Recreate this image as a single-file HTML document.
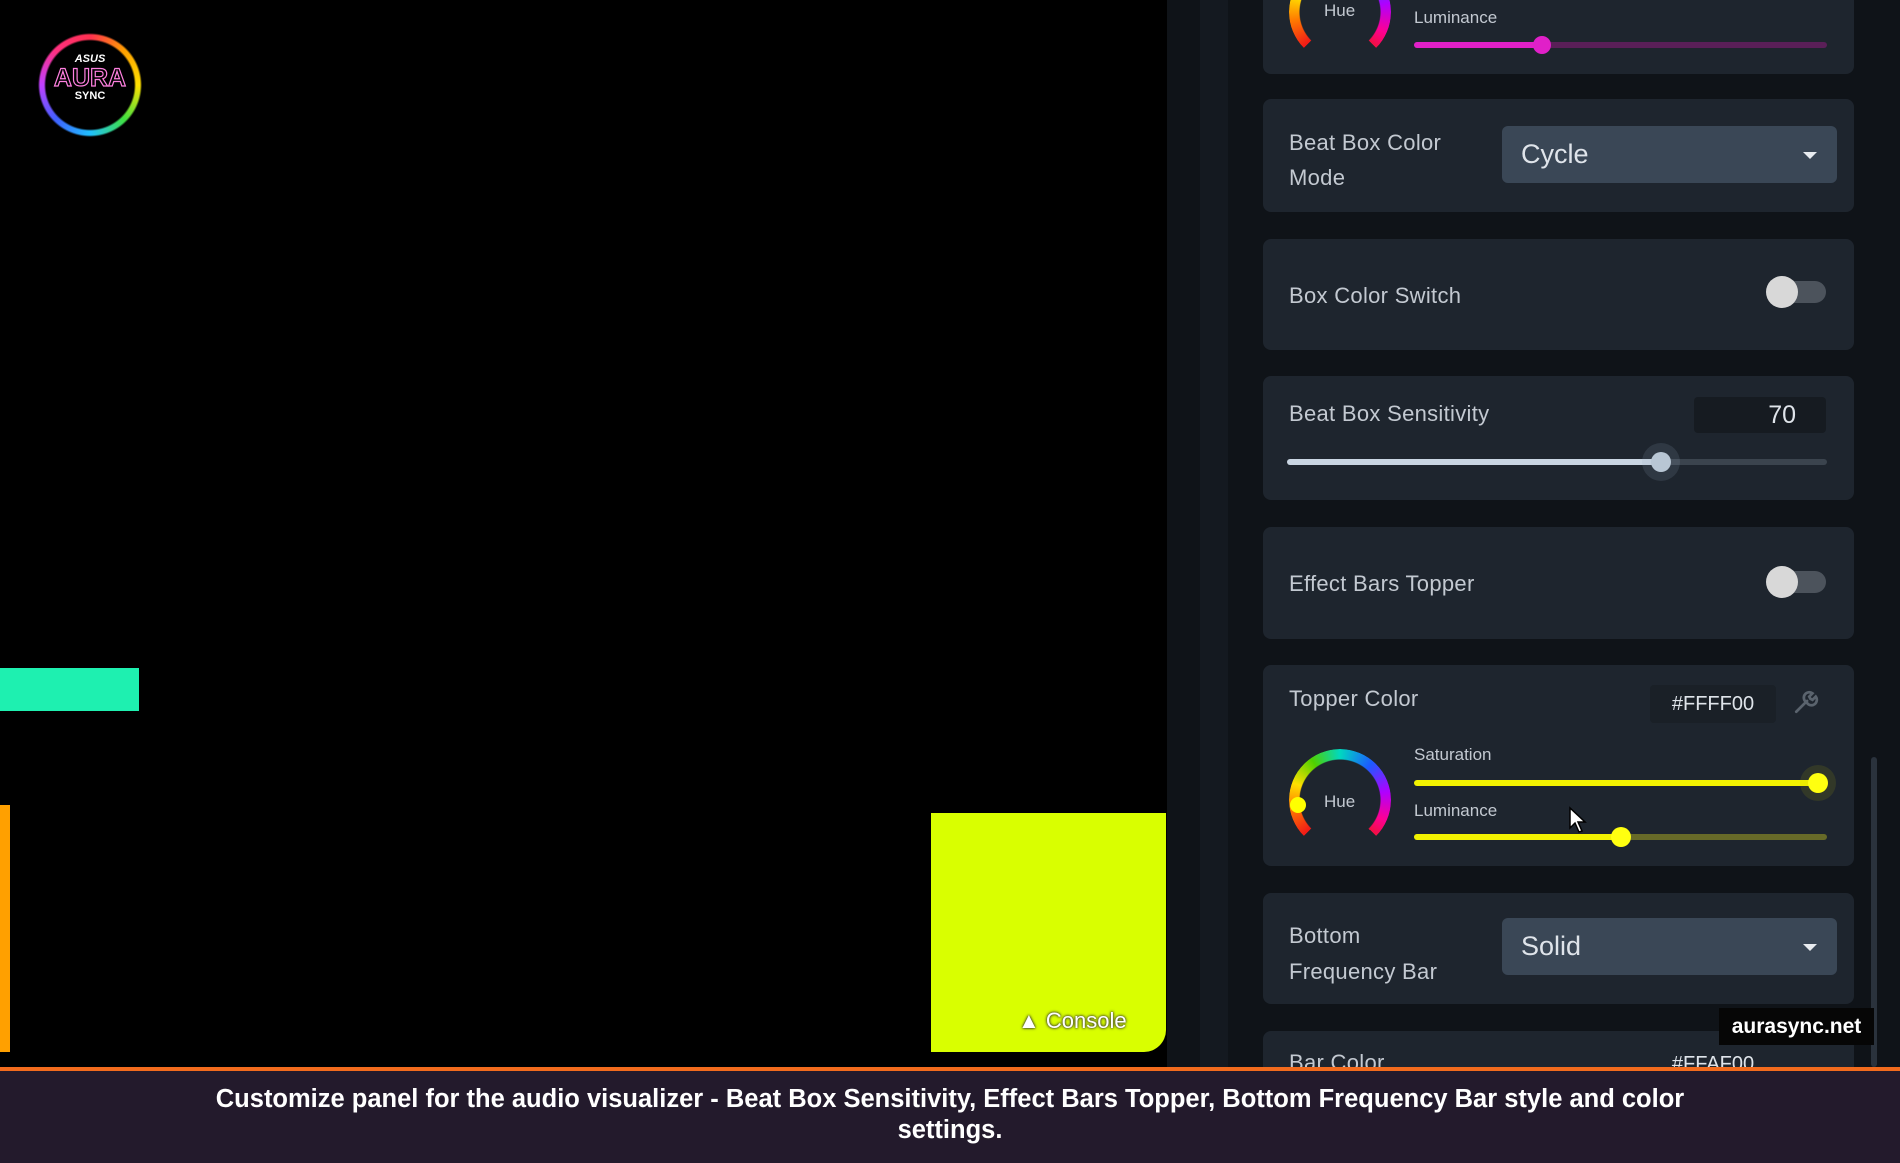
<!DOCTYPE html>
<html><head><meta charset="utf-8"><style>
*{margin:0;padding:0;box-sizing:border-box}
body{width:1900px;height:1163px;background:#000;position:relative;overflow:hidden;font-family:"Liberation Sans",sans-serif}
.a{position:absolute}
.card{position:absolute;left:1263px;width:591px;background:#1e252e;border-radius:8px}
.lbl{position:absolute;color:#c3c9d1;font-size:22px;letter-spacing:0.3px}
.dd{position:absolute;left:1502px;width:335px;background:#3a4756;border-radius:6px;color:#dfe4ea;font-size:27px}
.caret{position:absolute;right:20px;top:50%;margin-top:-3px;width:0;height:0;border-left:7px solid transparent;border-right:7px solid transparent;border-top:7px solid #e8ecf0}
.tog{position:absolute;width:60px;height:22px}
.tog .tr{position:absolute;left:10px;top:0;width:50px;height:22px;border-radius:11px;background:#4c535c}
.tog .th{position:absolute;left:0;top:-5px;width:32px;height:32px;border-radius:50%;background:#d8d8d8}
.hue{position:absolute;width:102px;height:102px;border-radius:50%;background:conic-gradient(from 225deg,#f01818 0deg,#ff7a00 35deg,#ffe000 65deg,#4fd000 100deg,#00d8c0 135deg,#1b5cff 175deg,#b000ff 215deg,#ff0090 250deg,#f01040 270deg,transparent 270deg);-webkit-mask:radial-gradient(circle,transparent 40px,#000 41px);mask:radial-gradient(circle,transparent 40px,#000 41px)}
.sl{position:absolute;height:6px;border-radius:3px}
.dot{position:absolute;border-radius:50%}
</style></head><body>
<!-- left -->
<div class="a" style="left:30px;top:25px;width:120px;height:120px;border-radius:50%;background:conic-gradient(#ff3050,#ffa000,#ffe000,#40e040,#20c0ff,#4060ff,#c040ff,#ff3080,#ff3050);-webkit-mask:radial-gradient(circle,transparent 44px,#000 46px,#000 50px,transparent 52px);mask:radial-gradient(circle,transparent 44px,#000 46px,#000 50px,transparent 52px);filter:drop-shadow(0 0 6px #ff6090)"></div>
<div class="a" style="left:40px;top:53px;width:100px;text-align:center;color:#fff;font-size:11px;font-weight:bold;font-style:italic">ASUS</div>
<div class="a" style="left:40px;top:64px;width:100px;text-align:center;color:transparent;-webkit-text-stroke:1.2px #ff80e0;font-size:25px;font-weight:bold">AURA</div>
<div class="a" style="left:40px;top:90px;width:100px;text-align:center;color:#fff;font-size:11px;font-weight:bold">SYNC</div>
<div class="a" style="left:0;top:668px;width:139px;height:43px;background:#1ef0b0"></div>
<div class="a" style="left:0;top:805px;width:10px;height:247px;background:#ffa000"></div>
<div class="a" style="left:931px;top:813px;width:235px;height:239px;background:#d9ff00;border-bottom-right-radius:22px"></div>
<div class="a" style="left:1018px;top:1008px;color:#fff;font-size:22px;text-shadow:0 0 3px #333,0 0 2px #333">▲ Console</div>
<!-- panel -->
<div class="a" style="left:1167px;top:0;width:733px;height:1070px;background:#0f1318"></div>
<div class="a" style="left:1200px;top:0;width:28px;height:1070px;background:#141920"></div>
<div class="a" style="left:1871px;top:757px;width:6px;height:310px;border-radius:3px;background:#2a323c"></div>
<!-- card1 -->
<div class="card" style="top:-10px;height:84px"></div>
<div class="hue" style="left:1289px;top:-39px"></div>
<div class="a" style="left:1324px;top:1px;color:#c3c9d1;font-size:17px">Hue</div>
<div class="a" style="left:1414px;top:8px;color:#c3c9d1;font-size:17px">Luminance</div>
<div class="sl" style="left:1414px;top:42px;width:413px;background:#5a1f58"></div>
<div class="sl" style="left:1414px;top:42px;width:128px;background:#e020c8"></div>
<div class="dot" style="left:1533px;top:36px;width:18px;height:18px;background:#e020c8"></div>
<!-- card2 -->
<div class="card" style="top:99px;height:113px"></div>
<div class="lbl" style="left:1289px;top:125px;line-height:35px">Beat Box Color<br>Mode</div>
<div class="dd" style="top:126px;height:57px;line-height:57px;padding-left:19px">Cycle<div class="caret"></div></div>
<!-- card3 -->
<div class="card" style="top:239px;height:111px"></div>
<div class="lbl" style="left:1289px;top:283px">Box Color Switch</div>
<div class="tog" style="left:1766px;top:281px"><div class="tr"></div><div class="th"></div></div>
<!-- card4 -->
<div class="card" style="top:376px;height:124px"></div>
<div class="lbl" style="left:1289px;top:401px">Beat Box Sensitivity</div>
<div class="a" style="left:1694px;top:397px;width:132px;height:36px;background:#161b21;border-radius:4px;color:#dfe4ea;font-size:25px;line-height:36px;text-align:right;padding-right:30px">70</div>
<div class="sl" style="left:1287px;top:459px;width:540px;background:#3b444e"></div>
<div class="sl" style="left:1287px;top:459px;width:374px;background:#c9d5e2"></div>
<div class="dot" style="left:1642px;top:443px;width:38px;height:38px;background:rgba(150,170,190,.15)"></div>
<div class="dot" style="left:1651px;top:452px;width:20px;height:20px;background:#b8c6d4"></div>
<!-- card5 -->
<div class="card" style="top:527px;height:112px"></div>
<div class="lbl" style="left:1289px;top:571px">Effect Bars Topper</div>
<div class="tog" style="left:1766px;top:571px"><div class="tr"></div><div class="th"></div></div>
<!-- card6 -->
<div class="card" style="top:665px;height:201px"></div>
<div class="lbl" style="left:1289px;top:686px">Topper Color</div>
<div class="a" style="left:1650px;top:685px;width:126px;height:38px;background:#1a2027;border-radius:4px;color:#dfe4ea;font-size:20px;line-height:38px;text-align:center">#FFFF00</div>
<svg class="a" style="left:1793px;top:689px" width="26" height="26" viewBox="0 0 24 24"><path d="M3 21 L13 11 M12 12 a5 5 0 0 1 6-8 l-3 3 l1 2 l2 1 l3-3 a5 5 0 0 1 -8 6" stroke="#5a636d" stroke-width="2.5" fill="none" stroke-linecap="round"/></svg>
<div class="hue" style="left:1289px;top:749px"></div>
<div class="dot" style="left:1290px;top:797px;width:16px;height:16px;background:#ffff00"></div>
<div class="a" style="left:1324px;top:792px;color:#c3c9d1;font-size:17px">Hue</div>
<div class="a" style="left:1414px;top:745px;color:#c3c9d1;font-size:17px">Saturation</div>
<div class="sl" style="left:1414px;top:780px;width:404px;background:#f2f200"></div>
<div class="dot" style="left:1800px;top:765px;width:36px;height:36px;background:rgba(200,200,0,.12)"></div>
<div class="dot" style="left:1808px;top:773px;width:20px;height:20px;background:#ffff10"></div>
<div class="a" style="left:1414px;top:801px;color:#c3c9d1;font-size:17px">Luminance</div>
<div class="sl" style="left:1414px;top:834px;width:413px;background:#676a28"></div>
<div class="sl" style="left:1414px;top:834px;width:207px;background:#f2f200"></div>
<div class="dot" style="left:1611px;top:827px;width:20px;height:20px;background:#ffff10"></div>
<svg class="a" style="left:1568px;top:806px" width="20" height="30" viewBox="0 0 20 30"><path d="M2 2 L2 22 L7 17 L11 26 L14 25 L10 16 L17 16 Z" fill="#fff" stroke="#000" stroke-width="1.5"/></svg>
<!-- card7 -->
<div class="card" style="top:893px;height:111px"></div>
<div class="lbl" style="left:1289px;top:918px;line-height:36px">Bottom<br>Frequency Bar</div>
<div class="dd" style="top:918px;height:57px;line-height:57px;padding-left:19px">Solid<div class="caret"></div></div>
<!-- card8 -->
<div class="card" style="top:1031px;height:60px"></div>
<div class="lbl" style="left:1289px;top:1050px">Bar Color</div>
<div class="a" style="left:1650px;top:1053px;width:126px;color:#dfe4ea;font-size:20px;text-align:center">#FFAF00</div>
<div class="a" style="left:1719px;top:1008px;width:155px;height:37px;background:#060606;color:#fff;font-size:21px;font-weight:bold;line-height:37px;text-align:center">aurasync.net</div>
<!-- caption -->
<div class="a" style="left:0;top:1067px;width:1900px;height:96px;background:#231a2c;border-top:4px solid #f26b1d"></div>
<div class="a" style="left:100px;top:1084px;width:1700px;text-align:center;color:#fff;font-size:25.5px;font-weight:bold;line-height:31px">Customize panel for the audio visualizer - Beat Box Sensitivity, Effect Bars Topper, Bottom Frequency Bar style and color<br>settings.</div>
</body></html>
